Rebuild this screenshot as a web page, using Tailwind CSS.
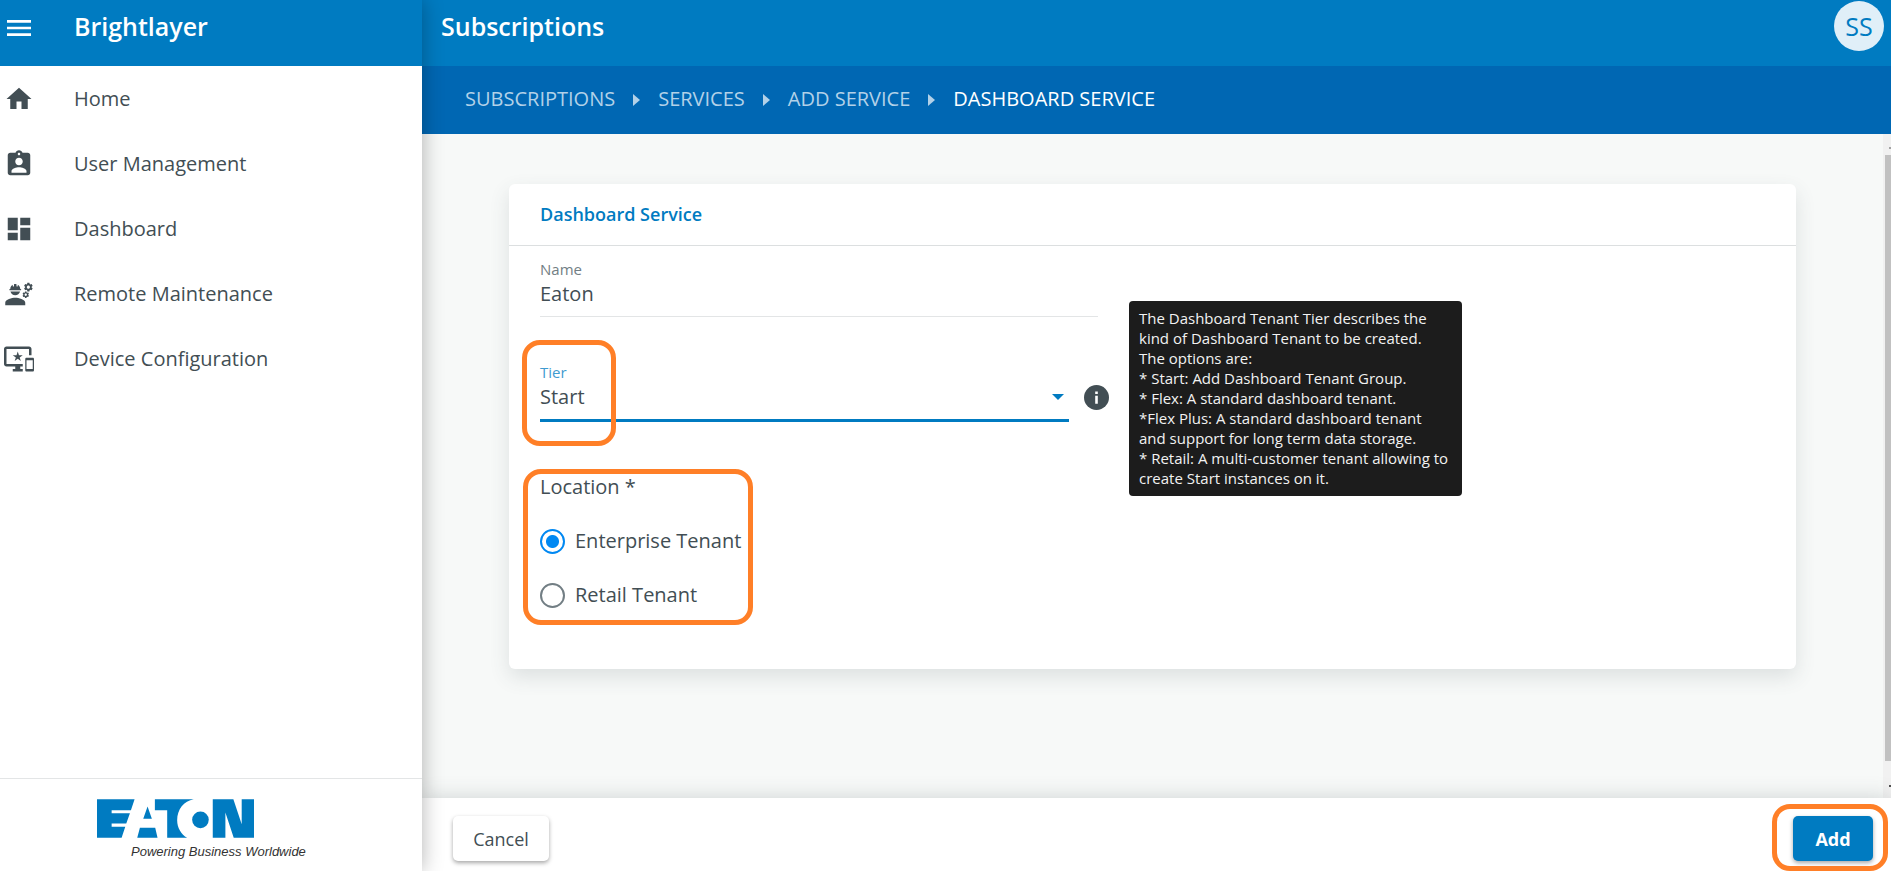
<!DOCTYPE html>
<html lang="en">
<head>
<meta charset="utf-8">
<meta name="viewport" content="width=device-width, initial-scale=1">
<title>Brightlayer - Subscriptions</title>
<script src="https://cdn.jsdelivr.net/npm/@tailwindcss/browser@4"></script>
</head>
<body class="flex h-screen overflow-hidden bg-[#f7f9f8] font-['Open_Sans',sans-serif] text-xl text-[#424e54]">

<aside class="relative z-10 flex w-[422px] shrink-0 flex-col bg-white shadow-[0_0_20px_rgba(0,0,0,0.3)]">
  <header class="flex h-[66px] shrink-0 items-center gap-[39px] bg-[#007bc1] pb-[14px] pl-[3px] text-white">
    <button type="button" aria-label="Toggle menu" class="block pt-1">
      <svg class="size-8 fill-current" viewBox="0 0 24 24"><path d="M3 18h18v-2H3v2zm0-5h18v-2H3v2zm0-7v2h18V6H3z"/></svg>
    </button>
    <span class="text-[25px] font-semibold">Brightlayer</span>
  </header>

  <nav class="flex flex-1 flex-col" aria-label="Main">
    <a href="#" class="flex h-[65px] items-center gap-10 pl-1">
      <svg class="size-[30px] fill-current" viewBox="0 0 24 24"><path d="M10 20v-6h4v6h5v-8h3L12 3 2 12h3v8z"/></svg>
      Home
    </a>
    <a href="#" class="flex h-[65px] items-center gap-10 pl-1">
      <svg class="size-[30px] fill-current" viewBox="0 0 24 24"><path d="M19 3h-4.180C14.400 1.840 13.300 1 12 1c-1.300 0-2.400.84-2.820 2H5c-1.100 0-2 .9-2 2v14c0 1.100.9 2 2 2h14c1.100 0 2-.9 2-2V5c0-1.100-.9-2-2-2zm-7 0c.55 0 1 .45 1 1s-.45 1-1 1-1-.45-1-1 .45-1 1-1zm0 4c1.660 0 3 1.340 3 3s-1.340 3-3 3-3-1.340-3-3 1.340-3 3-3zm6 12H6v-1.400c0-2 4-3.100 6-3.100s6 1.100 6 3.100V19z"/></svg>
      User Management
    </a>
    <a href="#" class="flex h-[65px] items-center gap-10 pl-1">
      <svg class="size-[30px] fill-current" viewBox="0 0 24 24"><path d="M3 13h8V3H3v10zm0 8h8v-6H3v6zm10 0h8V11h-8v10zm0-18v6h8V3h-8z"/></svg>
      Dashboard
    </a>
    <a href="#" class="flex h-[65px] items-center gap-10 pl-1">
      <svg class="size-[30px] fill-current" viewBox="0 0 24 24">
        <defs><path id="gear" d="M22.100 6.840c.01-.11.02-.22.02-.34 0-.12-.01-.23-.03-.34l.74-.58c.07-.05.08-.15.04-.22l-.7-1.210c-.04-.08-.14-.1-.21-.08l-.86.35c-.18-.14-.38-.25-.59-.34l-.13-.93c-.02-.09-.09-.15-.18-.15h-1.400c-.09 0-.16.06-.17.15l-.13.93c-.21.09-.41.21-.59.34l-.87-.35c-.08-.03-.17 0-.21.08l-.7 1.210c-.04.08-.03.17.04.22l.74.58c-.02.11-.03.23-.03.34 0 .11.01.23.03.34l-.74.58c-.07.05-.08.15-.04.22l.7 1.210c.04.08.14.1.21.08l.87-.35c.18.14.38.25.59.34l.13.93c.01.09.08.15.17.15h1.400c.09 0 .16-.06.17-.15l.13-.93c.21-.09.41-.21.59-.34l.87.35c.08.03.17 0 .21-.08l.7-1.210c.04-.08.03-.17-.04-.22l-.73-.58zm-2.600.91c-.69 0-1.250-.56-1.250-1.250s.56-1.250 1.250-1.250 1.250.56 1.250 1.250-.56 1.250-1.250 1.250z"/></defs>
        <path d="M9 15c-2.670 0-8 1.340-8 4v2h16v-2c0-2.660-5.330-4-8-4zM4.740 9h8.530c.27 0 .49-.22.49-.49v-.02c0-.27-.22-.49-.49-.49H13c0-1.480-.81-2.750-2-3.450v.95c0 .28-.22.5-.5.5s-.5-.22-.5-.5V4.140C9.680 4.060 9.350 4 9 4s-.68.06-1 .14V5.500c0 .28-.22.5-.5.5S7 5.780 7 5.500v-.95C5.810 5.250 5 6.520 5 8h-.26c-.27 0-.49.22-.49.49v.03c0 .26.22.48.49.48zM9 13c1.860 0 3.410-1.280 3.860-3H5.140c.45 1.720 2 3 3.860 3z"/>
        <use href="#gear"/>
        <use href="#gear" transform="translate(17.400 12.600) scale(.74) translate(-19.500 -6.500)"/>
      </svg>
      Remote Maintenance
    </a>
    <a href="#" class="flex h-[65px] items-center gap-10 pl-1">
      <svg class="size-[30px] fill-current" viewBox="0 0 24 24"><path d="M23 11.010L18 11c-.55 0-1 .45-1 1v9c0 .55.45 1 1 1h5c.55 0 1-.45 1-1v-9c0-.55-.45-.99-1-.99zM23 20h-5v-7h5v7zM20 2H2C.89 2 0 2.890 0 4v12c0 1.100.89 2 2 2h7v2H7v2h8v-2h-2v-2h2v-2H2V4h18v5h2V4c0-1.110-.9-2-2-2zm-8.030 7L11 6l-.97 3H7l2.470 1.760-.94 2.910 2.470-1.800 2.470 1.800-.94-2.910L15 9h-3.030z"/></svg>
      Device Configuration
    </a>
  </nav>

  <footer class="flex h-[93px] shrink-0 flex-col border-t border-[#e3e5e6] pt-5 pl-[97px]">
    <svg role="img" aria-label="Eaton" class="h-[39px] w-[157px] shrink-0 fill-[#007bc1]" viewBox="111 87 472 116">
      <path d="M111 87H224L213 120H155V129H210L199 160H155V170H196L185 203H111zM263 109L276 146H250zM240 173H286L293 203H232zM285 87H402C372 92 352 118 352 150C352 172 364 193 382 203H322V120H285zM459 87H521L546 162V87H583V203H522L497 127V203H459z"/>
      <circle cx="422" cy="149" r="25"/>
    </svg>
    <p class="mt-1 pl-[34px] font-['Liberation_Sans',sans-serif] text-[13px] leading-5 text-[#333] italic">Powering Business Worldwide</p>
  </footer>
</aside>

<div class="flex min-w-0 flex-1 flex-col">
  <header class="flex h-[66px] shrink-0 items-center justify-between bg-[#007bc1] pr-[7px] pb-[14px] pl-[19px] text-white">
    <h1 class="text-[25px] font-semibold">Subscriptions</h1>
    <button type="button" class="flex size-[50px] shrink-0 items-center justify-center rounded-full bg-[#e0eff8] text-[25px] text-[#007bc1]">SS</button>
  </header>

  <nav aria-label="Breadcrumb" class="flex h-[68px] shrink-0 items-center gap-[18px] bg-[#0067b3] pb-0.5 pl-[43px] whitespace-nowrap text-[#b2d1e8]">
    <a href="#">SUBSCRIPTIONS</a>
    <svg class="mt-0.5 h-3 w-[7px] shrink-0 fill-current" viewBox="0 0 7 12"><path d="M0 0L7 6L0 12z"/></svg>
    <a href="#">SERVICES</a>
    <svg class="mt-0.5 h-3 w-[7px] shrink-0 fill-current" viewBox="0 0 7 12"><path d="M0 0L7 6L0 12z"/></svg>
    <a href="#">ADD SERVICE</a>
    <svg class="mt-0.5 h-3 w-[7px] shrink-0 fill-current" viewBox="0 0 7 12"><path d="M0 0L7 6L0 12z"/></svg>
    <a href="#" aria-current="page" class="text-white">DASHBOARD SERVICE</a>
  </nav>

  <div class="flex min-h-0 flex-1">
    <main class="min-w-0 flex-1 px-[87px] pt-[50px]">
      <form id="service" class="rounded-md bg-white pb-[60px] shadow-[0_8px_20px_rgba(66,78,84,0.14)]">
        <h2 class="flex h-[62px] items-center border-b border-[#dcdfe0] px-[31px] pb-0.5 text-lg font-semibold text-[#007bc1]">Dashboard Service</h2>
        <div class="px-[31px] pt-[13px]">
          <div class="flex max-w-[558px] flex-col border-b border-[#e3e5e6] pb-2">
            <label for="name" class="mb-px text-[15px] leading-5 text-[#727e84]">Name</label>
            <input id="name" type="text" value="Eaton" class="h-7 outline-none">
          </div>

          <div class="relative mt-[45px] flex max-w-[569px] items-center gap-[15px]">
            <div class="relative flex flex-1 flex-col border-b-3 border-[#007bc1] pb-2">
              <label for="tier" class="mb-px text-[15px] leading-5 text-[#3f9bd0]">Tier</label>
              <select id="tier" class="h-7 appearance-none outline-none">
                <option>Start</option>
                <option>Flex</option>
                <option>Flex Plus</option>
                <option>Retail</option>
              </select>
              <svg class="pointer-events-none absolute right-[5px] bottom-[19px] h-1.5 w-3 fill-[#007bc1]" viewBox="0 0 12 6"><path d="M0 0H12L6 6z"/></svg>
            </div>
            <button type="button" aria-label="About tiers" aria-describedby="tier-help" class="mt-[10px]">
              <svg class="size-[25px]" viewBox="0 0 25 25"><circle cx="12.500" cy="12.500" r="12.500" fill="#424e54"/><path fill="#fff" d="M11.200 6.500h2.600v2.500h-2.600zM11.200 10.800h2.600v8h-2.600z"/></svg>
            </button>
            <div class="pointer-events-none absolute top-[-22px] left-[-18px] h-[106px] w-[94px] rounded-[18px] border-5 border-[#ff7f27]"></div>
            <div id="tier-help" role="tooltip" class="absolute top-[-61px] left-full ml-5 w-[333px] rounded bg-[#1c1c1c] px-[10px] pt-[7px] pb-2 text-[15px] leading-5 font-medium whitespace-nowrap text-[#f2f2f2]">
              The Dashboard Tenant Tier describes the<br>kind of Dashboard Tenant to be created.<br>The options are:<br>* Start: Add Dashboard Tenant Group.<br>* Flex: A standard dashboard tenant.<br>*Flex Plus: A standard dashboard tenant<br>and support for long term data storage.<br>* Retail: A multi-customer tenant allowing to<br>create Start instances on it.
            </div>
          </div>

          <fieldset class="relative mt-[51px] flex w-fit flex-col gap-[26px]">
            <legend class="mb-[26px]">Location *</legend>
            <label class="flex items-center gap-[10px]">
              <input type="radio" name="location" checked class="size-[25px] shrink-0 appearance-none rounded-full border-2 border-[#727e84] checked:border-[#0088f2] checked:bg-[radial-gradient(circle,#0088f2_6px,transparent_7px)]">
              Enterprise Tenant
            </label>
            <label class="flex items-center gap-[10px]">
              <input type="radio" name="location" class="size-[25px] shrink-0 appearance-none rounded-full border-2 border-[#727e84] checked:border-[#0088f2] checked:bg-[radial-gradient(circle,#0088f2_6px,transparent_7px)]">
              Retail Tenant
            </label>
            <div class="pointer-events-none absolute top-[-58px] left-[-17px] h-[156px] w-[230px] rounded-[18px] border-5 border-[#ff7f27]"></div>
          </fieldset>
        </div>
      </form>
    </main>

    <div aria-hidden="true" class="flex w-2 shrink-0 flex-col bg-[#f1f1f1] pl-0.5">
      <div class="flex h-[21px] items-center justify-end"><span class="mt-1.5 h-0.5 w-0.5 bg-[#a3a3a3]"></span></div>
      <div class="flex-1 bg-[#c1c1c1]"></div>
      <div class="flex h-[37px] items-center justify-end pt-3"><span class="h-0.5 w-0.5 bg-[#505050]"></span></div>
    </div>
  </div>

  <footer class="flex h-[73px] shrink-0 items-center justify-between bg-white pt-2 pr-[18px] pl-[31px] shadow-[0_0_20px_rgba(66,78,84,0.22)]">
    <button type="button" class="h-[45px] w-24 rounded-[5px] bg-white text-lg font-medium shadow-[0_2px_4px_rgba(0,0,0,0.35)]">Cancel</button>
    <div class="relative">
      <button type="submit" form="service" class="block h-[45px] w-20 rounded-[5px] bg-[#007bc1] text-lg font-bold text-white shadow-[0_2px_4px_rgba(0,0,0,0.35)]">Add</button>
      <div class="pointer-events-none absolute -top-3 -left-[21px] h-[67px] w-[116px] rounded-[18px] border-5 border-[#ff7f27]"></div>
    </div>
  </footer>
</div>

</body>
</html>
